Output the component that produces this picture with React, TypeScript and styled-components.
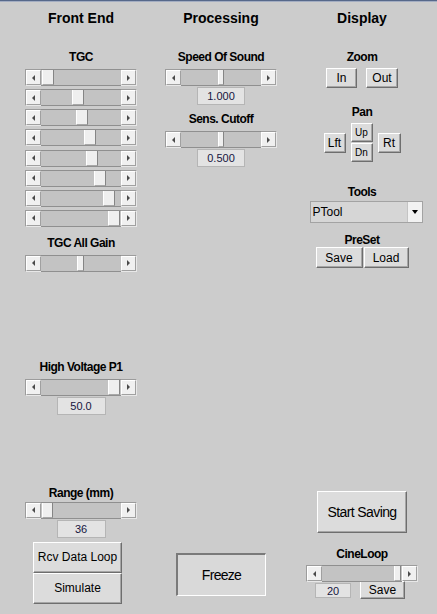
import React from 'react';
import styled, {createGlobalStyle} from "styled-components";

const GlobalStyle = createGlobalStyle`
    html, body, #root {
        margin: 0;
        height: 100%;
    }
    body {
        background: #cccccc;
        font-family: "Liberation Sans", Arial, sans-serif;
    }
`

type SliderPropsType = {
    at: number
    thumb?: number
    top?: number
}

const SLIDER_W = 112

const Slider = (props: SliderPropsType) => {
    const thumb = props.thumb ?? 12
    const left = Math.round(props.at * (SLIDER_W - 32 - thumb))
    return (
        <SliderBody $top={props.top ?? 5}>
            <Arrow $dir="left"/>
            <Track>
                <Thumb $w={thumb} style={{left}}/>
            </Track>
            <Arrow $dir="right"/>
        </SliderBody>
    );
};

export default function App() {
    const tgc = [0.015, 0.456, 0.515, 0.632, 0.662, 0.78, 0.912, 0.985]
    return (
        <Frame>
            <GlobalStyle/>
            <Column>
                <Header>Front End</Header>
                <Label $top={25}>TGC</Label>
                <SliderStack>
                    {tgc.map((v, i) => <Slider key={i} at={v} top={0}/>)}
                </SliderStack>
                <Label $top={10}>TGC All Gain</Label>
                <Slider at={0.493} thumb={7}/>

                <Label $top={89}>High Voltage P1</Label>
                <Slider at={0.985}/>
                <ValueBox $w={49}>50.0</ValueBox>

                <Label $top={72}>Range (mm)</Label>
                <Slider at={0.015} thumb={11} top={2}/>
                <ValueBox $w={49}>36</ValueBox>
                <ButtonStack>
                    <Button $w={89} $h={31}>Rcv Data Loop</Button>
                    <Button $w={89} $h={31}>Simulate</Button>
                </ButtonStack>
            </Column>

            <Column>
                <Header>Processing</Header>
                <Label $top={25}>Speed Of Sound</Label>
                <Slider at={0.5} thumb={6}/>
                <ValueBox $w={48}>1.000</ValueBox>
                <Label $top={8}>Sens. Cutoff</Label>
                <Slider at={0.5} thumb={6}/>
                <ValueBox $w={48}>0.500</ValueBox>
                <FreezeButton>Freeze</FreezeButton>
            </Column>

            <DisplayColumn>
                <Header>Display</Header>
                <Label $top={25}>Zoom</Label>
                <ButtonRow $top={4} $gap={9}>
                    <Button $w={31} $h={20}>In</Button>
                    <Button $w={32} $h={20}>Out</Button>
                </ButtonRow>

                <Label $top={18}>Pan</Label>
                <PanCluster>
                    <Button $w={22} $h={20}>Lft</Button>
                    <PanVertical>
                        <Button $w={22} $h={19} $small>Up</Button>
                        <Button $w={22} $h={19} $small>Dn</Button>
                    </PanVertical>
                    <Button $w={23} $h={20}>Rt</Button>
                </PanCluster>

                <Label $top={24}>Tools</Label>
                <Select>
                    <SelectText>PTool</SelectText>
                    <SelectArrow/>
                </Select>

                <Label $top={11}>PreSet</Label>
                <ButtonRow $top={0} $gap={1}>
                    <Button $w={47} $h={21}>Save</Button>
                    <Button $w={45} $h={21}>Load</Button>
                </ButtonRow>

                <BigButton>Start Saving</BigButton>
                <Label $top={15}>CineLoop</Label>
                <Slider at={0.986} thumb={7} top={4}/>
                <CineRow>
                    <ValueBox $w={36} $h={15}>20</ValueBox>
                    <CineSave $w={45} $h={18}>Save</CineSave>
                </CineRow>
            </DisplayColumn>
        </Frame>
    );
}

const Frame = styled.div`
    height: 614px;
    display: grid;
    grid-template-columns: 162px 118px 1fr;
    background: #cccccc;
    box-shadow: inset 0 1px 0 #56688a, inset 0 2px 0 #a3adc2;
    overflow: hidden;
`
const Column = styled.div`
    display: flex;
    flex-direction: column;
    align-items: center;
    padding-top: 10px;
`
const DisplayColumn = styled(Column)`
    padding-left: 7px;
`
const Header = styled.div`
    font-size: 14px;
    font-weight: 700;
    line-height: 16px;
    color: #000;
`
const Label = styled.div<{$top: number}>`
    margin-top: ${p => p.$top}px;
    font-size: 12px;
    font-weight: 700;
    letter-spacing: -0.5px;
    line-height: 13px;
    color: #000;
    white-space: nowrap;
`
const SliderStack = styled.div`
    margin-top: 5px;
    display: flex;
    flex-direction: column;
    gap: 3.15px;
`
const SliderBody = styled.div<{$top: number}>`
    margin-top: ${p => p.$top}px;
    width: ${SLIDER_W}px;
    height: 17px;
    box-sizing: border-box;
    display: flex;
    background: #c3c3c3;
    border: 1px solid;
    border-color: #9c9c9c #e8e8e8 #e8e8e8 #9c9c9c;
    flex: none;
`
const Arrow = styled.div<{$dir: 'left' | 'right'}>`
    width: 15px;
    flex: none;
    display: flex;
    align-items: center;
    justify-content: center;
    background: #f0f0f0;
    box-sizing: border-box;
    border: 1px solid;
    border-color: #ffffff #a0a0a0 #a0a0a0 #ffffff;
    &::after {
        content: '';
        width: 0;
        height: 0;
        border-top: 3px solid transparent;
        border-bottom: 3px solid transparent;
        ${p => p.$dir === 'left'
            ? 'border-right: 3px solid #4a4a4a;'
            : 'border-left: 3px solid #4a4a4a;'}
    }
`
const Track = styled.div`
    flex: 1;
    position: relative;
    border-top: 1px solid #8f8f8f;
    border-bottom: 1px solid #8f8f8f;
    margin: -1px 0;
`
const Thumb = styled.div<{$w: number}>`
    position: absolute;
    top: 0;
    bottom: 0;
    width: ${p => p.$w}px;
    box-sizing: border-box;
    background: #efefef;
    border-left: 1px solid #ffffff;
    border-right: 1px solid #858585;
    border-bottom: 1px solid #a8a8a8;
`
const ValueBox = styled.div<{$w: number, $h?: number}>`
    margin-top: 1px;
    width: ${p => p.$w}px;
    height: ${p => p.$h ?? 18}px;
    box-sizing: border-box;
    border: 1px solid #b5b5b5;
    background: #e3e3e3;
    display: flex;
    align-items: center;
    justify-content: center;
    font-size: 11px;
    color: #151540;
    flex: none;
`
const Button = styled.div<{$w: number, $h: number, $small?: boolean}>`
    width: ${p => p.$w}px;
    height: ${p => p.$h}px;
    box-sizing: border-box;
    display: flex;
    align-items: center;
    justify-content: center;
    background: #dcdcdc;
    border: 1px solid;
    border-color: #ffffff #6e6e6e #6e6e6e #ffffff;
    box-shadow: inset -1px -1px 0 #a6a6a6;
    font-size: ${p => p.$small ? 10 : 12}px;
    color: #000;
    white-space: nowrap;
    flex: none;
`
const ButtonStack = styled.div`
    margin-top: 4px;
    margin-right: 7px;
    display: flex;
    flex-direction: column;
`
const ButtonRow = styled.div<{$top: number, $gap: number}>`
    margin-top: ${p => p.$top}px;
    display: flex;
    gap: ${p => p.$gap}px;
`
const PanCluster = styled.div`
    margin-top: 4px;
    display: flex;
    align-items: center;
    gap: 5px;
`
const PanVertical = styled.div`
    display: flex;
    flex-direction: column;
    gap: 1px;
`
const Select = styled.div`
    margin-top: 2px;
    margin-left: 8px;
    width: 113px;
    height: 22px;
    box-sizing: border-box;
    display: flex;
    background: #d6d6d6;
    border: 1px solid #a3a3a3;
`
const SelectText = styled.div`
    flex: 1;
    display: flex;
    align-items: center;
    padding-left: 2px;
    font-size: 12px;
    color: #000;
`
const SelectArrow = styled.div`
    width: 14px;
    display: flex;
    align-items: center;
    justify-content: center;
    background: #f2f2f2;
    border-left: 1px solid #c4c4c4;
    &::after {
        content: '';
        border-left: 3px solid transparent;
        border-right: 3px solid transparent;
        border-top: 4px solid #000;
    }
`
const BigButton = styled.div`
    margin-top: 223px;
    width: 90px;
    height: 42px;
    box-sizing: border-box;
    display: flex;
    align-items: center;
    justify-content: center;
    background: #dcdcdc;
    border: 1px solid;
    border-color: #ffffff #6e6e6e #6e6e6e #ffffff;
    box-shadow: inset -1px -1px 0 #a6a6a6;
    font-size: 14px;
    letter-spacing: -0.6px;
    color: #000;
`
const FreezeButton = styled(BigButton)`
    margin-top: 386px;
    height: 43px;
    border-width: 2px 1px 1px 2px;
    border-color: #7a7a7a #ffffff #ffffff #7a7a7a;
    box-shadow: none;
    background: #d9d9d9;
    letter-spacing: -0.7px;
`
const CineRow = styled.div`
    margin-left: -4px;
    display: flex;
    align-items: flex-start;
    gap: 9px;
`
const CineSave = styled(Button)`
    margin-top: -1px;
`
